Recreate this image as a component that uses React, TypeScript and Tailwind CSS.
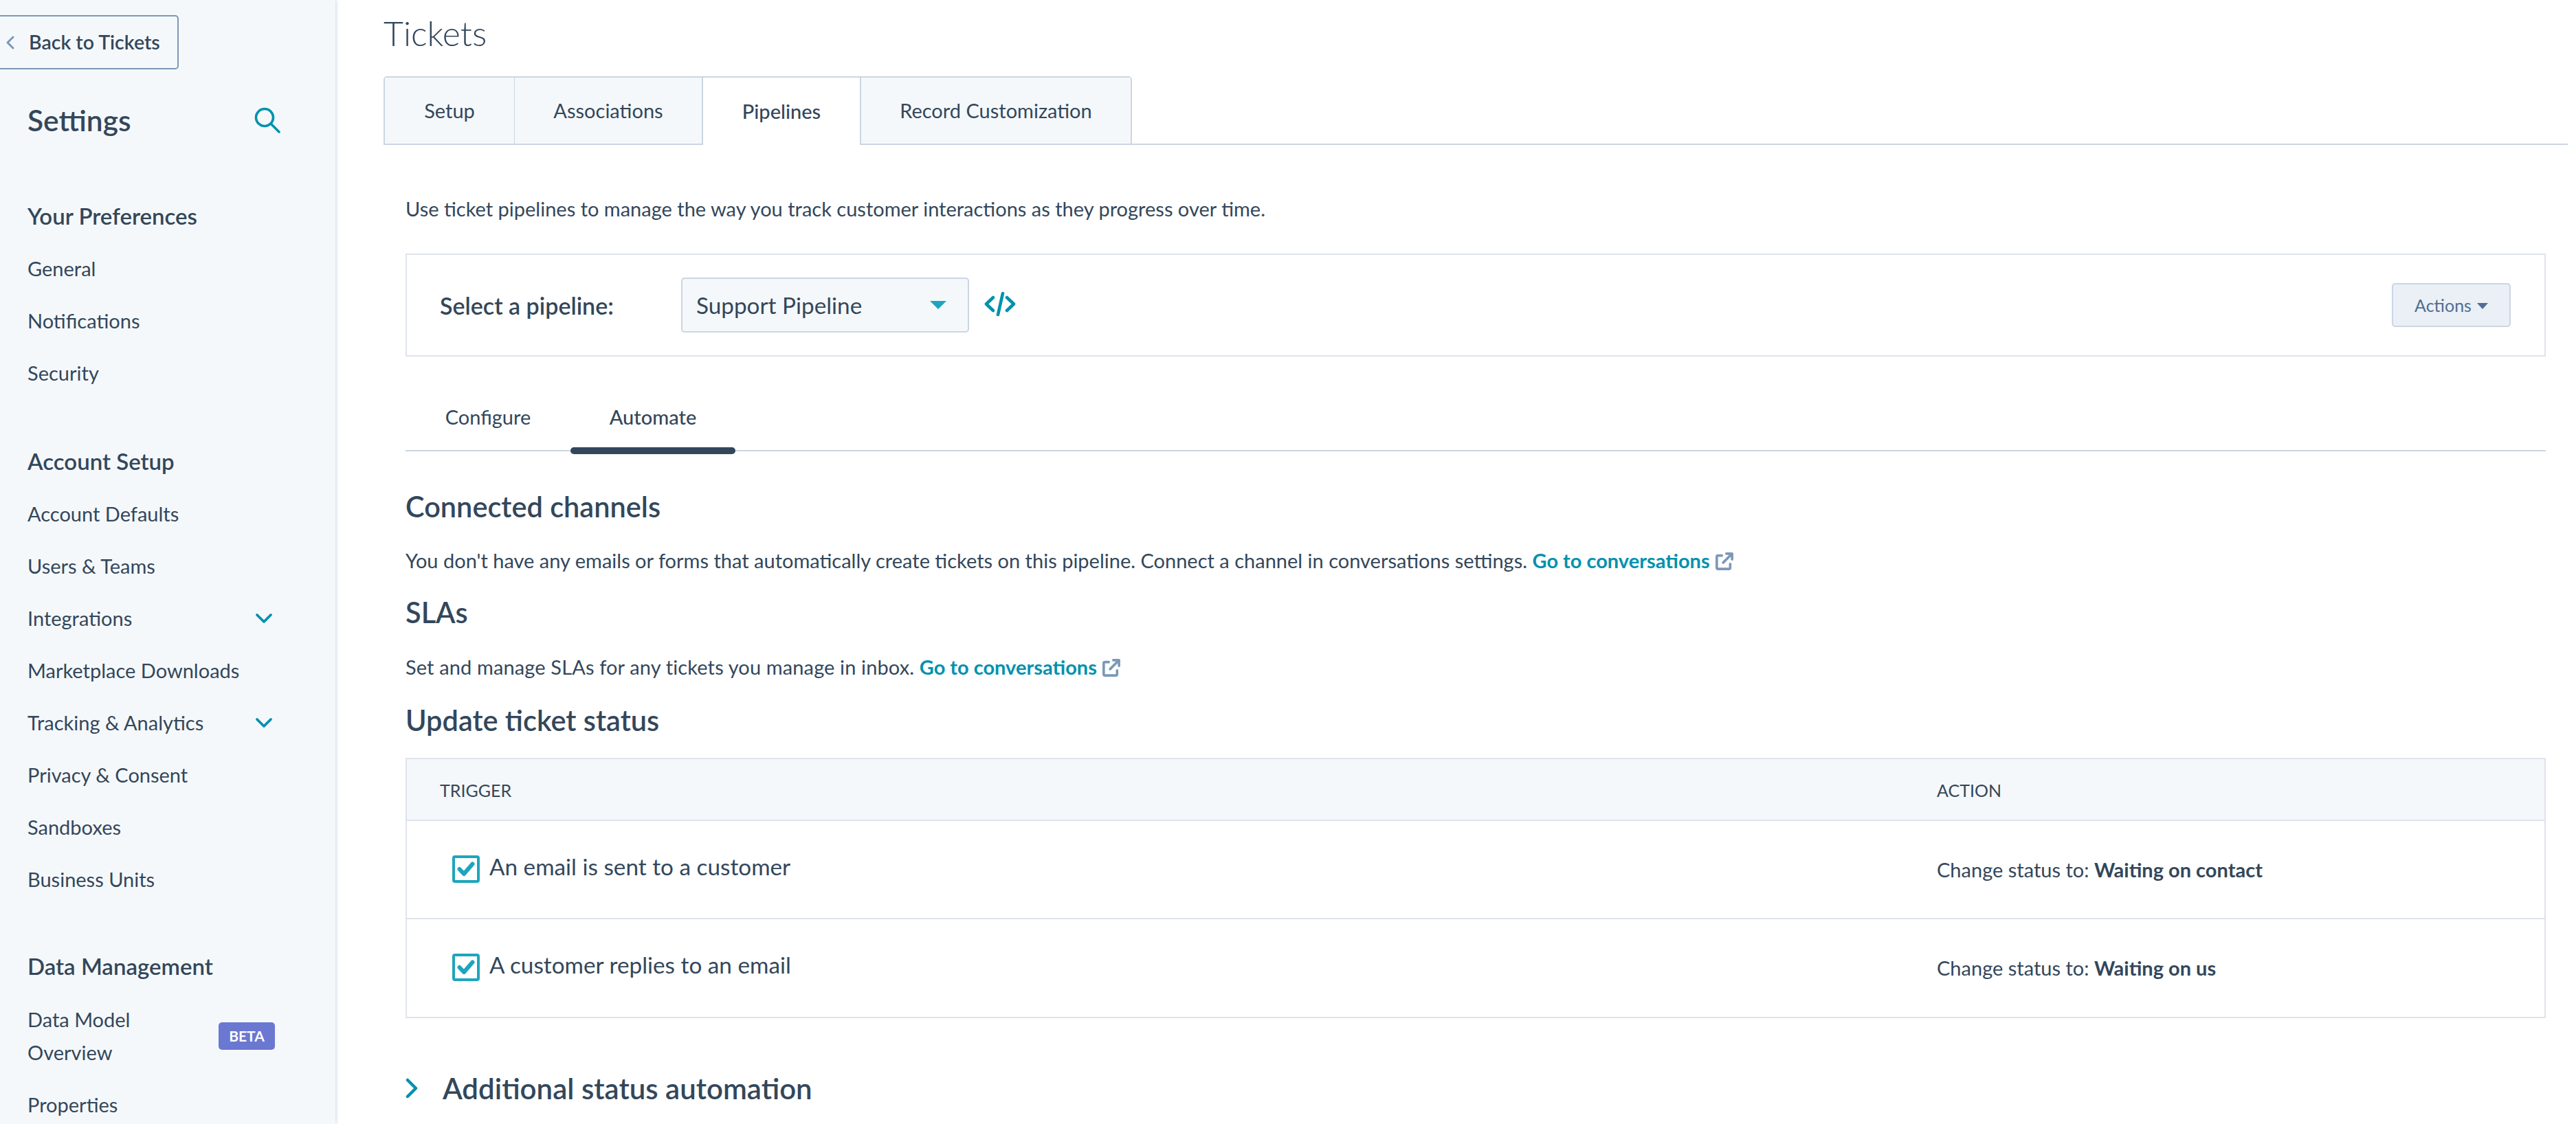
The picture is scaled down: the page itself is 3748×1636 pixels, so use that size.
import React from "react";

const font = { fontFamily: '"Lato", "Noto Sans", sans-serif' };

function Item({ label, chevron }: { label: string; chevron?: boolean }) {
  return (
    <div className="flex h-[76px] items-center justify-between pl-[40px] pr-[91px] text-[29px] text-[#33475b]">
      <span>{label}</span>
      {chevron && (
        <svg width="26" height="16" viewBox="0 0 26 16" fill="none" stroke="#0091ae" strokeWidth="3.8" strokeLinecap="round" strokeLinejoin="round">
          <path d="M3 3l10 10L23 3" />
        </svg>
      )}
    </div>
  );
}

function Heading({ label }: { label: string }) {
  return <div className="flex h-[76px] items-center pl-[40px] text-[33px] font-semibold text-[#33475b]">{label}</div>;
}

function Ext() {
  return (
    <svg width="26" height="26" viewBox="0 0 28 28" fill="none" stroke="#7c98b6" strokeWidth="3.9" strokeLinecap="round" strokeLinejoin="round" className="ml-[8px] inline-block align-[-3px]">
      <path d="M10 5H4a2 2 0 0 0-2 2v17a2 2 0 0 0 2 2h17a2 2 0 0 0 2-2v-6" />
      <path d="M17 2h9v9M25 3L12 16" />
    </svg>
  );
}

function Check() {
  return (
    <span className="flex h-[40px] w-[40px] shrink-0 items-center justify-center rounded-[4px] border-[4px] border-[#1ea5bd] bg-white">
      <svg width="26" height="22" viewBox="0 0 26 22" fill="none" stroke="#1ea5bd" strokeWidth="6" strokeLinecap="round" strokeLinejoin="round">
        <path d="M3.5 11l6.5 7L22.5 3.5" />
      </svg>
    </span>
  );
}

function Tab({ label, className }: { label: string; className: string }) {
  return <div className={`flex items-center justify-center text-[29px] text-[#33475b] ${className}`}>{label}</div>;
}

export default function App() {
  return (
    <div style={font} className="flex h-[1636px] w-[3748px] overflow-hidden bg-white text-[#33475b]">
      <aside className="h-full w-[488px] shrink-0 overflow-hidden bg-[#f5f8fa] shadow-[2px_0_4px_rgba(203,214,226,0.7)]">
        <div className="pt-[22px]">
          <div className="flex h-[79px] w-[260px] items-center rounded-r-[5px] border-[2px] border-l-0 border-[#7c98b6] pl-[8px]">
            <svg width="14" height="20" viewBox="0 0 14 20" fill="none" stroke="#7c98b6" strokeWidth="3" strokeLinecap="round" strokeLinejoin="round">
              <path d="M11 2L3 10l8 8" />
            </svg>
            <span className="ml-[20px] text-[28.5px] font-semibold">Back to Tickets</span>
          </div>
        </div>
        <div className="flex h-[152px] items-center justify-between pb-[4px] pl-[40px] pr-[80px]">
          <span className="text-[42.5px] font-semibold leading-none">Settings</span>
          <svg width="38" height="38" viewBox="0 0 38 38" fill="none" stroke="#0091ae" strokeWidth="3.6" strokeLinecap="round">
            <circle cx="15" cy="15" r="12.5" />
            <path d="M24.5 24.5L36 36" />
          </svg>
        </div>
        <div className="pt-[24px]">
          <Heading label="Your Preferences" />
          <Item label="General" />
          <Item label="Notifications" />
          <Item label="Security" />
        </div>
        <div className="pt-[53px]">
          <Heading label="Account Setup" />
          <Item label="Account Defaults" />
          <Item label="Users & Teams" />
          <Item label="Integrations" chevron />
          <Item label="Marketplace Downloads" />
          <Item label="Tracking & Analytics" chevron />
          <Item label="Privacy & Consent" />
          <Item label="Sandboxes" />
          <Item label="Business Units" />
        </div>
        <div className="pt-[51px]">
          <Heading label="Data Management" />
          <div className="flex items-center justify-between pb-[14px] pl-[40px] pr-[88px] pt-[15px] text-[29px] leading-[48px]">
            <span>
              Data Model
              <br />
              Overview
            </span>
            <span className="flex h-[40px] w-[82px] items-center justify-center rounded-[5px] bg-[#6a78d1] text-[21px] font-bold text-white">BETA</span>
          </div>
          <Item label="Properties" />
        </div>
      </aside>

      <main className="min-w-0 flex-1 pl-[70px] pr-[12px]">
        <h1 className="flex h-[111px] items-start pt-[18px] text-[50px] font-light leading-[60px]">Tickets</h1>
        <div className="flex h-[100px] border-b-[2px] border-[#cbd6e2]">
          <div className="mb-[-2px] flex overflow-hidden rounded-t-[5px]">
            <Tab label="Setup" className="w-[190px] border-[2px] border-r-0 border-[#cbd6e2] bg-[#f5f8fa]" />
            <Tab label="Associations" className="w-[273px] border-[2px] border-r-0 border-l-[1px] border-[#cbd6e2] bg-[#f5f8fa]" />
            <Tab label="Pipelines" className="w-[230px] border-t-[2px] border-l-[2px] border-[#cbd6e2] bg-white font-medium" />
            <Tab label="Record Customization" className="w-[396px] border-[2px] border-[#cbd6e2] bg-[#f5f8fa]" />
          </div>
        </div>
        <div className="w-[3146px] pl-[32px]">
          <p className="flex h-[158px] items-center pt-[28px] text-[29px]">Use ticket pipelines to manage the way you track customer interactions as they progress over time.</p>
          <div className="flex h-[150px] items-center justify-between border-[2px] border-[#dfe3eb] pl-[48px] pr-[49px]">
            <div className="flex items-center">
              <span className="w-[351px] text-[34px] font-semibold">Select a pipeline:</span>
              <div className="flex h-[80px] w-[419px] items-center justify-between rounded-[5px] border-[2px] border-[#cbd6e2] bg-[#f5f8fa] pl-[20px] pr-[31px] text-[33.3px]">
                <span className="pt-[2px]">Support Pipeline</span>
                <svg width="24" height="12" viewBox="0 0 24 12" className="fill-[#1ea5bd]">
                  <path d="M0 0h24L12 12z" />
                </svg>
              </div>
              <svg width="46" height="37" viewBox="0 0 46 37" fill="none" stroke="#0091ae" strokeWidth="4.6" strokeLinecap="round" strokeLinejoin="round" className="ml-[22px] mt-[-4px]">
                <path d="M13 9L3 18.5 13 28M33 9l10 9.5L33 28M27 3l-7 31" />
              </svg>
            </div>
            <div className="flex h-[64px] w-[173px] items-center justify-center gap-[8px] rounded-[5px] border-[2px] border-[#cbd6e2] bg-[#eaf0f6] pt-[2px] text-[25px] text-[#506e91]">
              Actions
              <svg width="16" height="9" viewBox="0 0 16 9" className="fill-[#506e91]">
                <path d="M0 0h16L8 9z" />
              </svg>
            </div>
          </div>
          <div className="mt-[32px] flex h-[106px] border-b-[2px] border-[#cbd6e2] text-[29px]">
            <div className="flex h-full w-[240px] items-center justify-center pt-[8px]">Configure</div>
            <div className="relative flex h-full w-[240px] items-center justify-center pt-[8px] font-medium">
              Automate
              <span className="absolute bottom-[-6px] left-0 h-[10px] w-[240px] rounded-full bg-[#33475b]" />
            </div>
          </div>
          <h2 className="mt-[55px] text-[41.5px] font-semibold leading-[50px]">Connected channels</h2>
          <p className="mt-[35px] text-[29px] leading-[38px]">
            You don't have any emails or forms that automatically create tickets on this pipeline. Connect a channel in conversations settings.{" "}
            <span className="font-bold text-[#0091ae]">Go to conversations</span>
            <Ext />
          </p>
          <h2 className="mt-[31px] text-[41.5px] font-semibold leading-[50px]">SLAs</h2>
          <p className="mt-[36px] text-[29px] leading-[38px]">
            <span className="tracking-[0.13px]">Set and manage SLAs for any tickets you manage in inbox.</span>{" "}
            <span className="font-bold text-[#0091ae]">Go to conversations</span>
            <Ext />
          </p>
          <h2 className="mt-[33px] text-[41.5px] font-semibold leading-[50px]">Update ticket status</h2>
          <div className="mt-[30px] border-[2px] border-[#dfe3eb]">
            <div className="grid h-[90px] grid-cols-[2178px_1fr] items-center border-b-[2px] border-[#dfe3eb] bg-[#f5f8fa] pl-[48px] pt-[3px] text-[25px]">
              <span>TRIGGER</span>
              <span>ACTION</span>
            </div>
            <div className="grid h-[143px] grid-cols-[2178px_1fr] items-center border-b-[2px] border-[#dfe3eb] pl-[48px] text-[29px]">
              <div className="flex items-center gap-[14px] pb-[2px] pl-[18px] text-[33.3px]">
                <Check />
                <span className="mt-[-6px]">An email is sent to a customer</span>
              </div>
              <span>
                Change status to: <b>Waiting on contact</b>
              </span>
            </div>
            <div className="grid h-[142px] grid-cols-[2178px_1fr] items-center pl-[48px] text-[29px]">
              <div className="flex items-center gap-[14px] pb-[2px] pl-[18px] text-[33.3px]">
                <Check />
                <span className="mt-[-6px]">A customer replies to an email</span>
              </div>
              <span>
                Change status to: <b>Waiting on us</b>
              </span>
            </div>
          </div>
          <div className="mt-[77px] flex items-center">
            <svg width="18" height="30" viewBox="0 0 18 30" fill="none" stroke="#0091ae" strokeWidth="4.5" strokeLinecap="round" strokeLinejoin="round">
              <path d="M3 3l12 12L3 27" />
            </svg>
            <span className="ml-[36px] text-[42px] font-semibold leading-[50px]">Additional status automation</span>
          </div>
        </div>
      </main>
    </div>
  );
}
